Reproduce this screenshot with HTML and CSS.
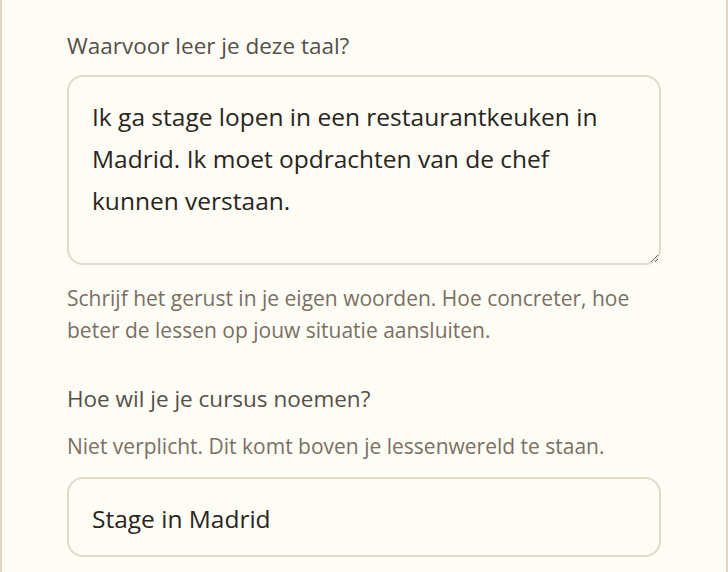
FILE: index.html
```html
<!DOCTYPE html>
<html lang="nl">
<head>
<meta charset="utf-8">
<title>Cursus</title>
<link rel="stylesheet" href="styles.css">
</head>
<body>
<div class="card">
  <div class="field">
    <label class="label" for="doel">Waarvoor leer je deze taal?</label>
    <textarea id="doel" class="area">Ik ga stage lopen in een restaurantkeuken in Madrid. Ik moet opdrachten van de chef kunnen verstaan.</textarea>
    <p class="help">Schrijf het gerust in je eigen woorden. Hoe concreter, hoe beter de lessen op jouw situatie aansluiten.</p>
  </div>
  <div class="field second">
    <label class="label" for="naam">Hoe wil je je cursus noemen?</label>
    <p class="help small">Niet verplicht. Dit komt boven je lessenwereld te staan.</p>
    <input id="naam" class="input" type="text" value="Stage in Madrid">
  </div>
</div>
</body>
</html>
```
FILE: styles.css
```css
html, body {
  margin: 0;
  padding: 0;
  background: #fdfcf5;
  height: 100%;
  overflow: hidden;
}
body {
  font-family: "Open Sans", "Noto Sans", sans-serif;
}
.card {
  box-sizing: border-box;
  width: 728px;
  min-height: 572px;
  border-left: 2px solid #ddd3c5;
  border-right: 2px solid #ddd3c5;
  background: #fdfcf5;
  padding: 31px 65px 0 65px;
}
.field {
  display: flex;
  flex-direction: column;
}
.label {
  font-size: 22.5px;
  line-height: 30px;
  color: #55504a;
  margin-bottom: 14px;
}
.area {
  box-sizing: border-box;
  width: 594px;
  height: 190px;
  border: 2px solid #e3d9cb;
  border-radius: 16px;
  background: #fdfcf5;
  padding: 19px 30px 19px 23px;
  font-family: "Open Sans", "Noto Sans", sans-serif;
  font-size: 24.5px;
  line-height: 42px;
  color: #2a2520;
  resize: vertical;
  outline: none;
}
.help {
  margin: 17px 0 0 0;
  font-size: 21px;
  line-height: 32px;
  color: #7a7064;
}
.second {
  margin-top: 38px;
}
.second .label {
  margin-bottom: 0;
}
.help.small {
  margin: 16px 0 0 0;
}
.input {
  box-sizing: border-box;
  width: 594px;
  height: 80px;
  margin-top: 15px;
  border: 2px solid #e3d9cb;
  border-radius: 16px;
  background: #fdfcf5;
  padding: 3px 23px 0 23px;
  font-family: "Open Sans", "Noto Sans", sans-serif;
  font-size: 24.5px;
  color: #2a2520;
  outline: none;
}
```
